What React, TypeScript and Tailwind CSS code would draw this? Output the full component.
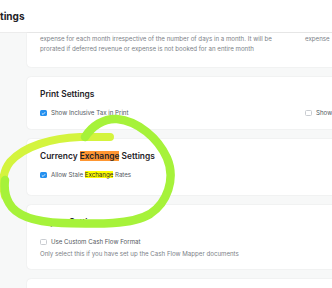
import React from 'react';

function Check({ checked }: { checked?: boolean }) {
  if (checked) {
    return (
      <span className="flex h-[6.5px] w-[6.5px] shrink-0 items-center justify-center rounded-[1.5px] bg-[#2490ef]">
        <svg viewBox="0 0 8 8" className="h-[5px] w-[5px]">
          <path d="M1.8 4.2 L3.3 5.6 L6.2 2.4" fill="none" stroke="white" strokeWidth="1.3" strokeLinecap="round" strokeLinejoin="round" />
        </svg>
      </span>
    );
  }
  return <span className="h-[6.5px] w-[6.5px] shrink-0 rounded-[1.5px] border-[0.7px] border-[#c9ccd1] bg-white" />;
}

function CheckRow({ label, checked }: { label: React.ReactNode; checked?: boolean }) {
  return (
    <div className="flex h-[8px] items-center gap-[4.5px] text-[6.15px] leading-[8px] text-[#525861]">
      <Check checked={checked} />
      <span className="whitespace-nowrap">{label}</span>
    </div>
  );
}

function Title({ children }: { children: React.ReactNode }) {
  return <div className="text-[8.4px] font-semibold leading-[10px] text-[#1f2328]">{children}</div>;
}

function Card({ children, className }: { children: React.ReactNode; className?: string }) {
  return (
    <div className={`w-[543px] shrink-0 rounded-[4px] bg-white px-[13px] shadow-[0_0_1.5px_rgba(0,0,0,0.12)] ${className ?? ''}`}>
      {children}
    </div>
  );
}

export default function App() {
  return (
    <div className="relative h-[288px] w-[332px] overflow-hidden bg-[#f7f8f8] font-['Inter',sans-serif]">
      <div className="flex h-[33px] items-center border-b border-[#ececec] bg-white">
        <div className="text-[10px] font-bold leading-none text-[#1f2328]">tings</div>
      </div>

      <div className="flex flex-col gap-[10px] pl-[27px]">
        <Card className="rounded-t-none pb-[13px] pt-[1px]">
          <div className="grid grid-cols-[252px_252px] gap-x-[13px] text-[6.15px] leading-[10px] text-[#7c8188]">
            <div>
              <div className="whitespace-nowrap">expense for each month irrespective of the number of days in a month. It will be</div>
              <div className="whitespace-nowrap">prorated if deferred revenue or expense is not booked for an entire month</div>
            </div>
            <div>expense</div>
          </div>
        </Card>

        <Card className="pb-[12px] pt-[12px]">
          <Title>Print Settings</Title>
          <div className="mt-[10px] grid grid-cols-[252px_252px] gap-x-[13px]">
            <CheckRow checked label="Show Inclusive Tax in Print" />
            <CheckRow label="Show Taxes as Table in Print" />
          </div>
        </Card>

        <Card className="pb-[16px] pt-[12px]">
          <Title>
            Currency <span className="bg-[#ff9632]">Exchange</span> Settings
          </Title>
          <div className="mt-[10px]">
            <CheckRow
              checked
              label={
                <>
                  Allow Stale <span className="bg-[#ffff00] text-[#1f2328]">Exchange</span> Rates
                </>
              }
            />
          </div>
        </Card>

        <Card className="pb-[10px] pt-[12px]">
          <Title>Report Settings</Title>
          <div className="mt-[11px]">
            <CheckRow label="Use Custom Cash Flow Format" />
          </div>
          <div className="mt-[3px] text-[6.15px] leading-[10px] text-[#7c8188]">
            Only select this if you have set up the Cash Flow Mapper documents
          </div>
        </Card>

        <Card className="h-[20px]">
          <div />
        </Card>
      </div>

      <svg viewBox="0 0 332 288" className="pointer-events-none absolute inset-0 h-[288px] w-[332px]">
        <path
          d="M110 137 L80 137 C52 138 24 146 10 162 C3 171 2 184 5 196"
          fill="none"
          stroke="#d4f43e"
          strokeWidth="8"
          strokeLinecap="round"
        />
        <path
          d="M85 137 C92 126 104 118 117 119 C138 121 158 138 167 158 C176 179 167 203 150 214 C132 225 98 224 62 223 C36 222 16 216 9 203 C5 196 4 188 5 180"
          fill="none"
          stroke="#a6f23a"
          strokeWidth="8.5"
          strokeLinecap="round"
          strokeLinejoin="round"
        />
      </svg>
    </div>
  );
}
